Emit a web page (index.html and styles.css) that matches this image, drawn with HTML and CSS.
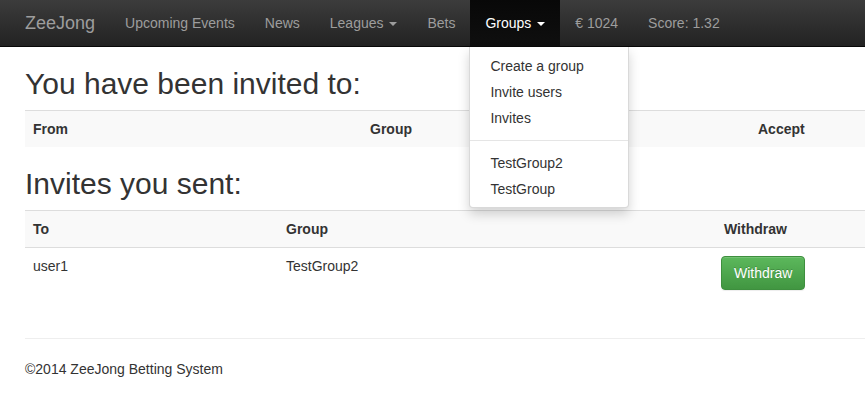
FILE: index.html
```
<!DOCTYPE html>
<html lang="en">
<head>
  <meta charset="UTF-8" />
  <title>ZeeJong - Invites</title>
  <link rel="stylesheet" href="styles.css">
</head>
<body>

  <!-- Navbar -->
  <div class="navbar">
    <a class="brand" href="#">ZeeJong</a>
    <ul class="nav">
      <li><a href="#">Upcoming Events</a></li>
      <li><a href="#">News</a></li>
      <li><a href="#">Leagues <span class="caret"></span></a></li>
      <li><a href="#">Bets</a></li>
      <li class="dropdown open">
        <a href="#">Groups <span class="caret"></span></a>
        <ul class="dropdown-menu">
          <li><a href="#">Create a group</a></li>
          <li><a href="#">Invite users</a></li>
          <li><a href="#">Invites</a></li>
          <li class="divider"></li>
          <li><a href="#">TestGroup2</a></li>
          <li><a href="#">TestGroup</a></li>
        </ul>
      </li>
      <li><a href="#">€ 1024</a></li>
      <li><a href="#">Score: 1.32</a></li>
    </ul>
  </div>

  <div class="container">
    <h2>You have been invited to:</h2>
    <table class="table empty">
      <tr class="head">
        <th class="col-from">From</th>
        <th class="col-group">Group</th>
        <th>Accept</th>
      </tr>
    </table>

    <h2>Invites you sent:</h2>
    <table class="table">
      <tr class="head">
        <th class="col-to">To</th>
        <th class="col-group2">Group</th>
        <th>Withdraw</th>
      </tr>
      <tr>
        <td>user1</td>
        <td>TestGroup2</td>
        <td><button class="btn-success">Withdraw</button></td>
      </tr>
    </table>
  </div>

  <footer class="container">
    <hr>
    <p>©2014 ZeeJong Betting System</p>
  </footer>

</body>
</html>
```

FILE: styles.css
```
body {
  font-family: "Liberation Sans", Arial, sans-serif;
  font-size: 14px;
  line-height: 20px;
  color: #333;
  background: #fff;
  margin: 0;
}
a {
  text-decoration: none;
}

/* Navbar */
.navbar {
  display: flex;
  align-items: stretch;
  height: 47px;
  padding-left: 10px;
  background: linear-gradient(to bottom, #3c3c3c 0, #222 100%);
  border-bottom: 1px solid #080808;
  box-sizing: border-box;
}
.brand {
  padding: 0 15px;
  font-size: 18px;
  line-height: 47px;
  color: #9d9d9d;
}
.nav {
  display: flex;
  list-style: none;
  margin: 0;
  padding: 0;
}
.nav > li {
  position: relative;
}
.nav > li > a {
  display: block;
  padding: 0 15px;
  line-height: 46px;
  color: #9d9d9d;
}
.nav > li.open > a {
  color: #fff;
  background: linear-gradient(to bottom, #080808 0, #0f0f0f 100%);
}
.caret {
  display: inline-block;
  width: 0;
  height: 0;
  margin-left: 2px;
  vertical-align: middle;
  border-top: 4px solid;
  border-right: 4px solid transparent;
  border-left: 4px solid transparent;
}
.dropdown-menu {
  position: absolute;
  top: 47px;
  left: -1px;
  z-index: 10;
  min-width: 158px;
  margin: 0;
  padding: 6px 0 5px;
  list-style: none;
  background: #fff;
  border: 1px solid rgba(0, 0, 0, .15);
  border-top: 0;
  border-radius: 0 0 4px 4px;
  box-shadow: 0 6px 12px rgba(0, 0, 0, .175);
}
.dropdown-menu a {
  display: block;
  padding: 3px 20px;
  color: #333;
  white-space: nowrap;
}
.dropdown-menu .divider {
  height: 1px;
  margin: 9px 0;
  background: #e5e5e5;
}

/* Content */
.container {
  padding-left: 25px;
}
h2 {
  font-size: 30px;
  font-weight: 500;
  line-height: 33px;
  margin: 20px 0 10px;
}
.table {
  width: 100%;
  border-collapse: collapse;
  margin-bottom: 20px;
}
.table th, .table td {
  padding: 8px;
  text-align: left;
  vertical-align: top;
}
.table td {
  border-top: 1px solid #ddd;
}
.table .head {
  background: #f9f9f9;
  border-top: 1px solid #ddd;
}
.table .head th {
  border-bottom: 1px solid #ddd;
}
.table.empty .head th {
  border-bottom: 0;
}
.col-from { width: 321px; }
.col-group { width: 372px; }
.col-to { width: 237px; }
.col-group2 { width: 422px; }

.btn-success {
  font-family: inherit;
  font-size: 14px;
  line-height: 20px;
  padding: 6px 12px;
  margin-left: -3px;
  color: #fff;
  background: linear-gradient(to bottom, #5cb85c 0, #419641 100%);
  border: 1px solid #3e8f3e;
  border-radius: 4px;
  text-shadow: 0 -1px 0 rgba(0, 0, 0, .2);
  box-shadow: inset 0 1px 0 rgba(255, 255, 255, .15), 0 1px 1px rgba(0, 0, 0, .075);
  cursor: pointer;
}

footer {
  padding-top: 20px;
}
footer hr {
  margin: 0 0 20px;
  border: 0;
  border-top: 1px solid #eee;
}
footer p {
  margin: 0 0 10px;
}
```
